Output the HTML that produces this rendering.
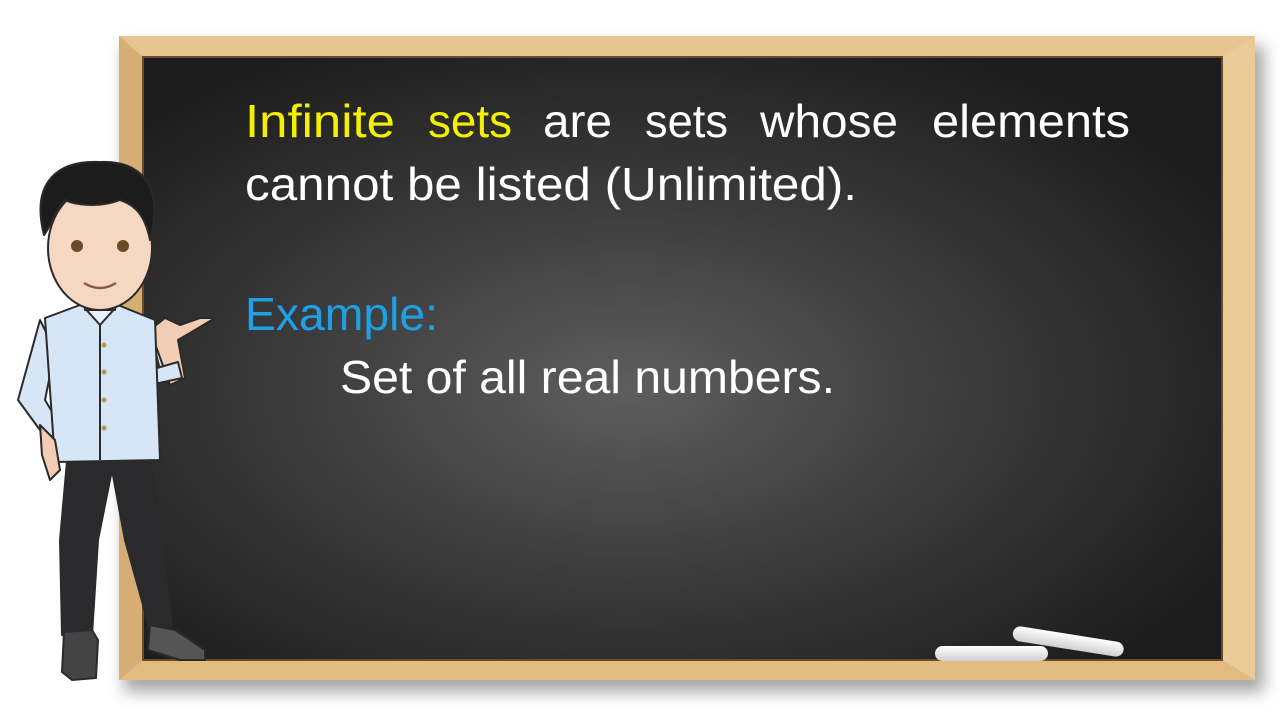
<!DOCTYPE html>
<html><head><meta charset="utf-8"><style>
html,body{margin:0;padding:0;width:1280px;height:720px;overflow:hidden;background:#fff}
.wrap{position:absolute;left:0;top:0;width:1280px;height:720px}
</style></head><body><div class="wrap">
<svg width="1280" height="720" viewBox="0 0 1280 720" xmlns="http://www.w3.org/2000/svg">
<defs>
<filter id="sh" x="-10%" y="-10%" width="120%" height="130%"><feGaussianBlur stdDeviation="8"/></filter>
<linearGradient id="wood" x1="0" y1="0" x2="1" y2="1"><stop offset="0" stop-color="#d9b27a"/><stop offset="0.5" stop-color="#e8c690"/><stop offset="1" stop-color="#d4a868"/></linearGradient>
<radialGradient id="board" cx="0.45" cy="0.55" r="0.65"><stop offset="0" stop-color="#5e5e5e"/><stop offset="0.5" stop-color="#3a3a3a"/><stop offset="1" stop-color="#1b1b1b"/></radialGradient>
<linearGradient id="chalk" x1="0" y1="0" x2="0" y2="1"><stop offset="0" stop-color="#ffffff"/><stop offset="1" stop-color="#cfcfcf"/></linearGradient>
</defs>
<rect x="124" y="46" width="1140" height="646" fill="#000" opacity="0.35" filter="url(#sh)"/>
<rect x="119" y="36" width="1136" height="644" fill="url(#wood)"/>
<polygon points="119,36 1255,36 1222,57 143,57" fill="#e6c590"/>
<polygon points="119,36 143,57 143,660 119,680" fill="#d6ae74"/>
<polygon points="1255,36 1222,57 1222,660 1255,680" fill="#e9cb98"/>
<polygon points="119,680 143,660 1222,660 1255,680" fill="#e2bb80"/>
<rect x="143" y="57" width="1079" height="603" fill="url(#board)" stroke="#6b4a2a" stroke-width="2"/>
<g font-family="Liberation Sans, sans-serif" font-size="46">
<text x="245" y="137" fill="#f5f000" textLength="150" lengthAdjust="spacingAndGlyphs">Infinite</text>
<text x="428" y="137" fill="#f5f000" textLength="84" lengthAdjust="spacingAndGlyphs">sets</text>
<text x="543" y="137" fill="#fff" textLength="69" lengthAdjust="spacingAndGlyphs">are</text>
<text x="645" y="137" fill="#fff" textLength="83" lengthAdjust="spacingAndGlyphs">sets</text>
<text x="760" y="137" fill="#fff" textLength="138" lengthAdjust="spacingAndGlyphs">whose</text>
<text x="932" y="137" fill="#fff" textLength="198" lengthAdjust="spacingAndGlyphs">elements</text>
<text x="245" y="200" fill="#fff" textLength="612" lengthAdjust="spacingAndGlyphs">cannot be listed (Unlimited).</text>
<text x="245" y="330" fill="#1fa0e6" textLength="193" lengthAdjust="spacingAndGlyphs">Example:</text>
<text x="340" y="393" fill="#fff" textLength="495" lengthAdjust="spacingAndGlyphs">Set of all real numbers.</text>
</g>
<!-- chalk -->
<g transform="rotate(9 1068 643)"><rect x="1012" y="634" width="112" height="15" rx="7.5" fill="url(#chalk)"/></g>
<rect x="935" y="646" width="113" height="15" rx="7.5" fill="url(#chalk)"/>
<!-- character -->
<g stroke="#2a2a2a" stroke-width="2" stroke-linejoin="round">
<!-- legs -->
<path d="M68 450 L60 540 L62 635 L92 635 L98 540 L112 470 L125 540 L150 630 L172 625 L162 540 L148 450 Z" fill="#2b2b2e"/>
<!-- shoes -->
<path d="M64 632 L62 672 L72 680 L96 678 L98 640 L92 630 Z" fill="#444"/>
<path d="M150 625 L148 650 L180 660 L205 660 L205 650 L175 630 Z" fill="#555"/>
<!-- arms -->
<path d="M40 320 L18 400 L40 430 L55 440 L60 425 L45 400 L55 350 Z" fill="#d7e6f7"/>
<path d="M155 320 L175 380 L160 370 L150 330 Z" fill="#d7e6f7"/>
<path d="M150 330 L170 385 L185 378 L178 340 L195 330 L215 318 L200 318 L180 325 L165 318 Z" fill="#f2cdb4"/>
<path d="M150 370 L150 385 L182 378 L178 362 Z" fill="#d7e6f7"/>
<!-- shirt -->
<path d="M45 318 L80 305 L118 305 L155 320 L160 460 L55 462 Z" fill="#d7e6f7"/>
<path d="M82 305 L100 325 L118 305" fill="#e6effa"/>
<line x1="100" y1="325" x2="100" y2="460"/>
<!-- hand -->
<path d="M40 425 L55 440 L60 470 L50 480 L42 455 Z" fill="#f2cdb4"/>
<!-- neck & head -->
<path d="M85 285 L85 310 L115 310 L115 285 Z" fill="#f2cdb4"/>
<ellipse cx="100" cy="248" rx="52" ry="62" fill="#f6d7c1"/>
<path d="M44 235 C30 180 60 160 100 162 C140 160 165 185 150 240 C145 215 135 205 120 200 C100 208 75 205 65 200 C55 210 52 225 44 235 Z" fill="#1c1c1c"/>
</g>
<g fill="#6b4a25"><circle cx="77" cy="246" r="6"/><circle cx="123" cy="246" r="6"/></g>
<path d="M84 283 Q100 293 116 283" stroke="#8a5a48" stroke-width="2.5" fill="none"/>
<g fill="#b69550"><circle cx="104" cy="345" r="2.5"/><circle cx="104" cy="372" r="2.5"/><circle cx="104" cy="400" r="2.5"/><circle cx="104" cy="428" r="2.5"/></g>
</svg>
</div></body></html>
